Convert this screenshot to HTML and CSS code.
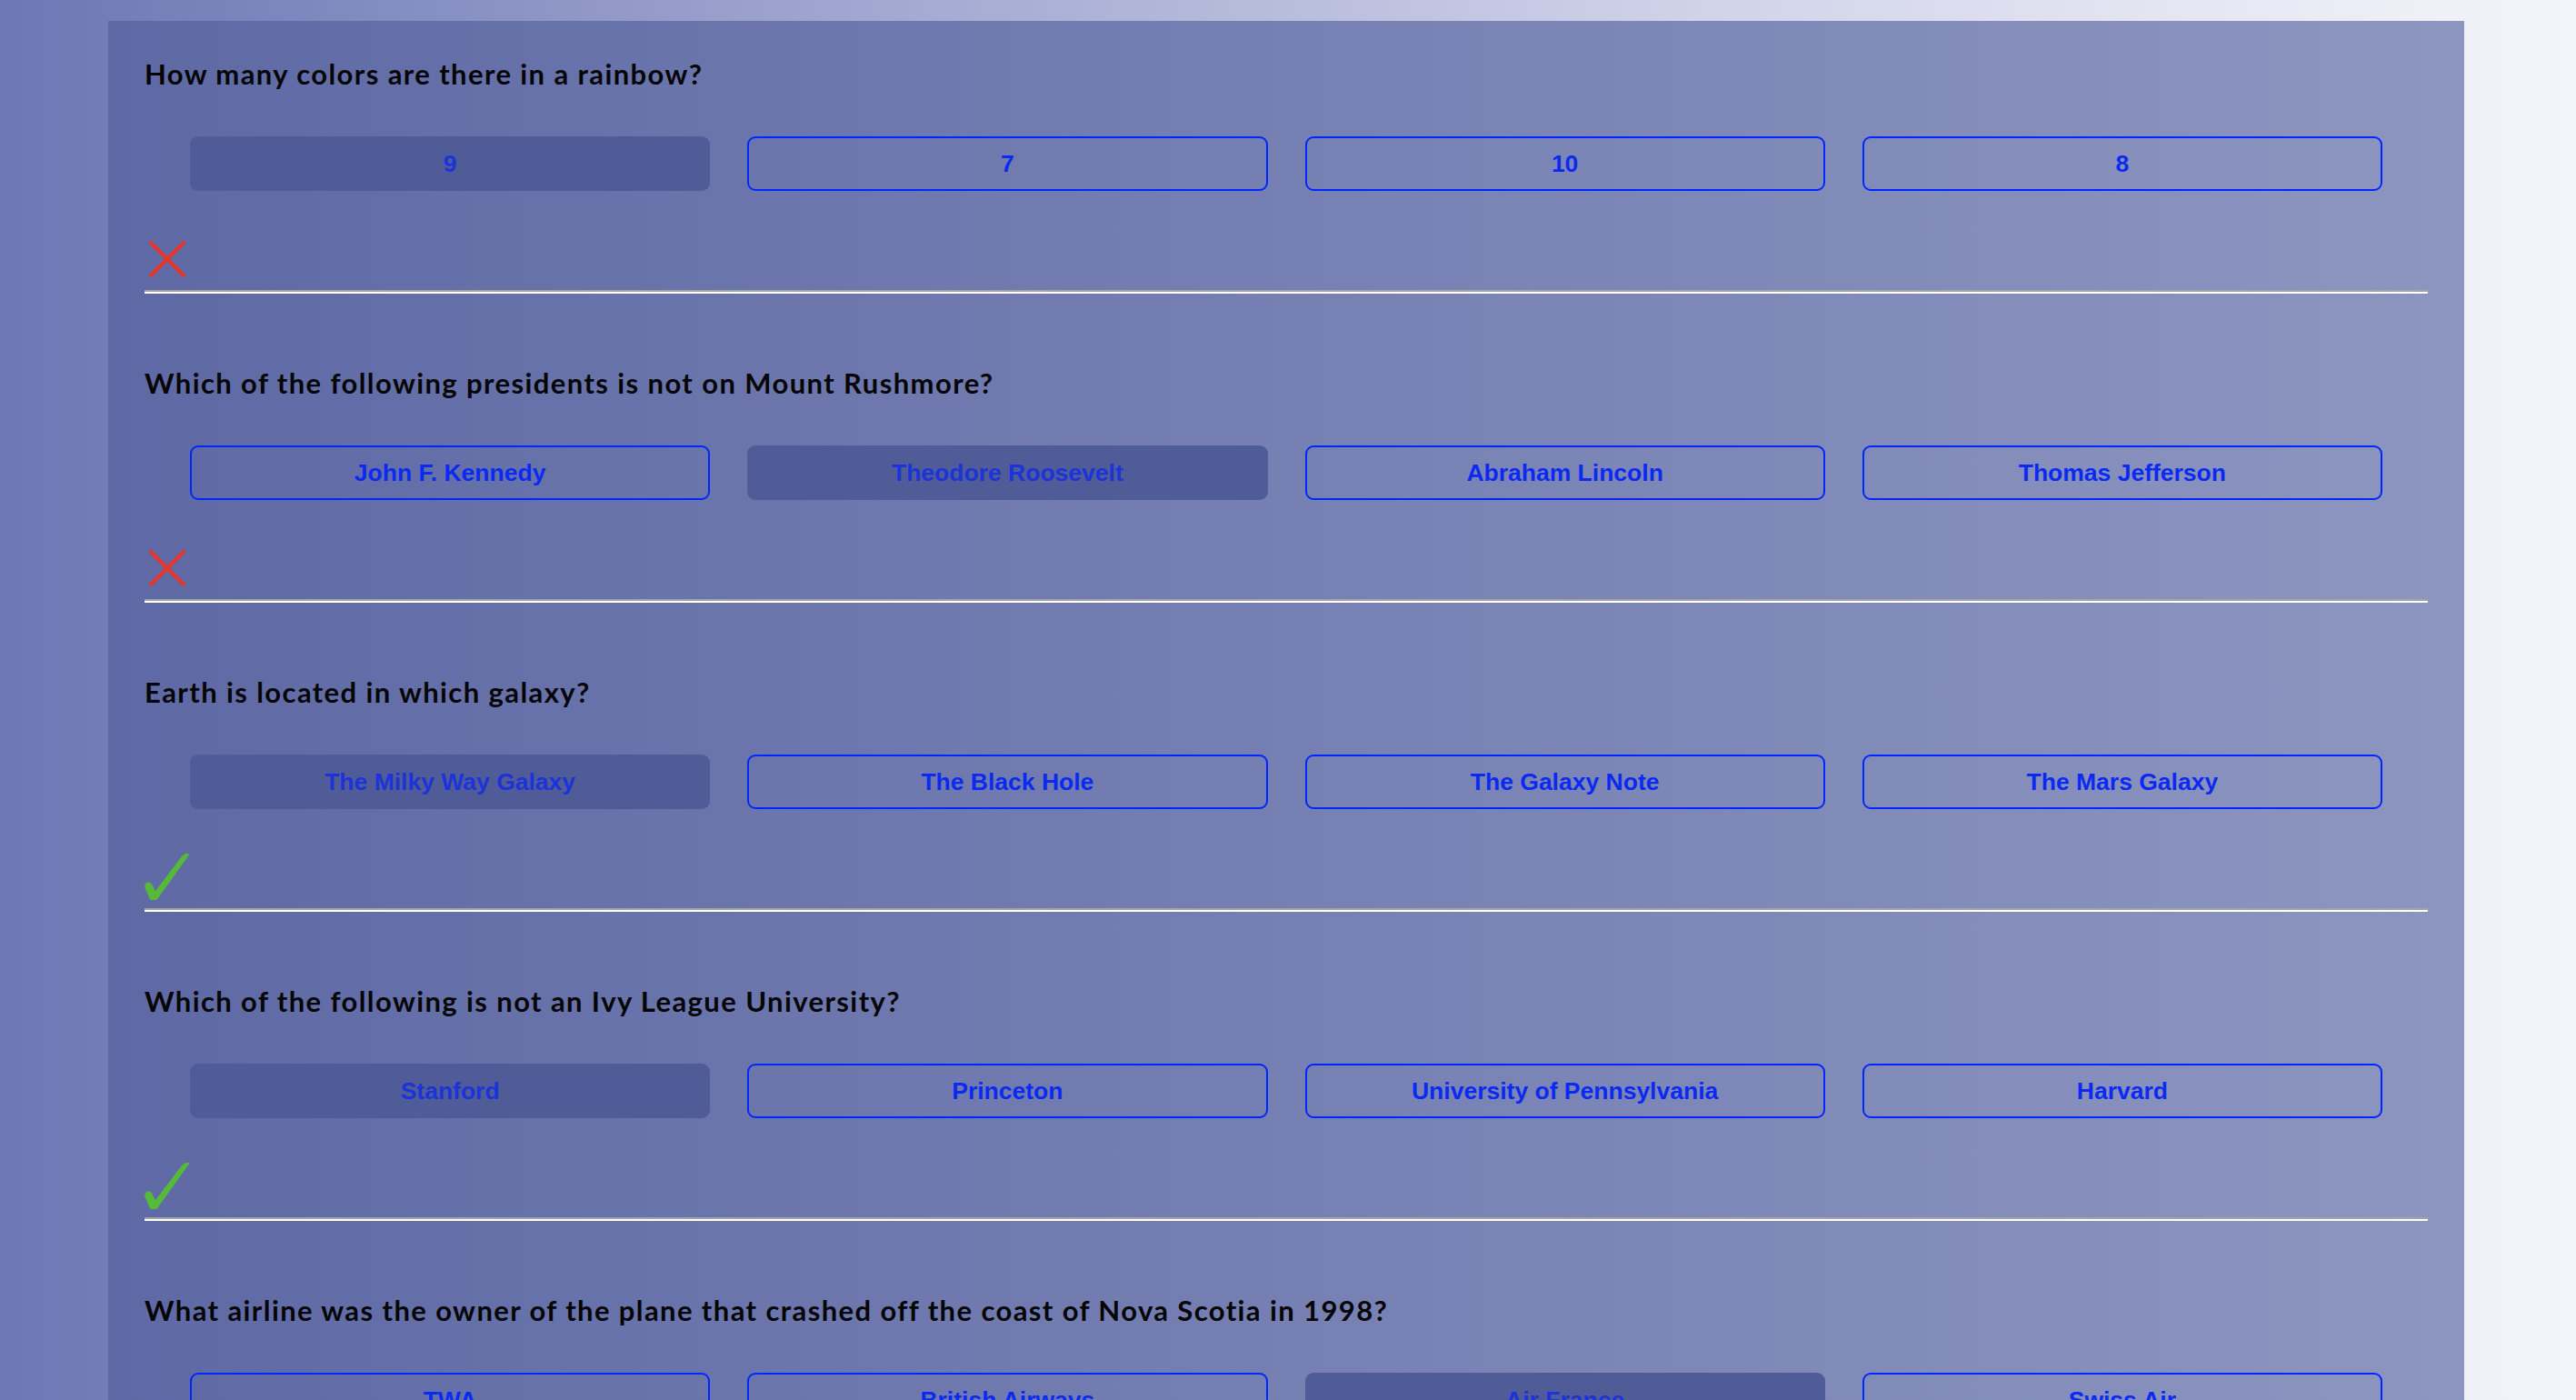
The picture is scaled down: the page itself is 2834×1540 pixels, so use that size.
FILE: index.html
```html
<!DOCTYPE html>
<html lang="en">
<head>
<meta charset="utf-8">
<title>Quiz Results</title>
<link rel="stylesheet" href="styles.css">
</head>
<body>
<main class="quiz">
  <section class="qblock">
    <h2 class="question">How many colors are there in a rainbow?</h2>
    <div class="answers">
      <button class="answer selected">9</button>
      <button class="answer">7</button>
      <button class="answer">10</button>
      <button class="answer">8</button>
    </div>
    <div class="result">
      <svg class="icon" viewBox="0 0 52 52" width="52" height="52"><line x1="6" y1="8" x2="44" y2="46" class="cross"/><line x1="44" y1="8" x2="6" y2="46" class="cross"/></svg>
    </div>
    <hr class="divider">
  </section>

  <section class="qblock">
    <h2 class="question">Which of the following presidents is not on Mount Rushmore?</h2>
    <div class="answers">
      <button class="answer">John F. Kennedy</button>
      <button class="answer selected">Theodore Roosevelt</button>
      <button class="answer">Abraham Lincoln</button>
      <button class="answer">Thomas Jefferson</button>
    </div>
    <div class="result">
      <svg class="icon" viewBox="0 0 52 52" width="52" height="52"><line x1="6" y1="8" x2="44" y2="46" class="cross"/><line x1="44" y1="8" x2="6" y2="46" class="cross"/></svg>
    </div>
    <hr class="divider">
  </section>

  <section class="qblock">
    <h2 class="question">Earth is located in which galaxy?</h2>
    <div class="answers">
      <button class="answer selected">The Milky Way Galaxy</button>
      <button class="answer">The Black Hole</button>
      <button class="answer">The Galaxy Note</button>
      <button class="answer">The Mars Galaxy</button>
    </div>
    <div class="result">
      <svg class="icon" viewBox="0 0 52 52" width="52" height="52"><path class="check" d="M48.6 3 L14.2 51 Q11.5 53.2 6.2 51.8 L0.4 38.5 Q-0.2 34 3 32.8 Q6.3 31.8 7.8 34.2 L11.9 42.2 L40.6 4.6 Q43.8 0.8 47.2 0.8 Q50 1.2 48.6 3 Z"/></svg>
    </div>
    <hr class="divider">
  </section>

  <section class="qblock">
    <h2 class="question">Which of the following is not an Ivy League University?</h2>
    <div class="answers">
      <button class="answer selected">Stanford</button>
      <button class="answer">Princeton</button>
      <button class="answer">University of Pennsylvania</button>
      <button class="answer">Harvard</button>
    </div>
    <div class="result">
      <svg class="icon" viewBox="0 0 52 52" width="52" height="52"><path class="check" d="M48.6 3 L14.2 51 Q11.5 53.2 6.2 51.8 L0.4 38.5 Q-0.2 34 3 32.8 Q6.3 31.8 7.8 34.2 L11.9 42.2 L40.6 4.6 Q43.8 0.8 47.2 0.8 Q50 1.2 48.6 3 Z"/></svg>
    </div>
    <hr class="divider">
  </section>

  <section class="qblock">
    <h2 class="question">What airline was the owner of the plane that crashed off the coast of Nova Scotia in 1998?</h2>
    <div class="answers">
      <button class="answer">TWA</button>
      <button class="answer">British Airways</button>
      <button class="answer selected">Air France</button>
      <button class="answer">Swiss Air</button>
    </div>
    <div class="result">
      <svg class="icon" viewBox="0 0 52 52" width="52" height="52"><line x1="6" y1="8" x2="44" y2="46" class="cross"/><line x1="44" y1="8" x2="6" y2="46" class="cross"/></svg>
    </div>
    <hr class="divider">
  </section>
</main>
</body>
</html>
```

FILE: styles.css
```css
html {
  overflow: hidden;
}

body {
  margin: 0;
  padding-top: 23px;
  min-height: 1540px;
  background: linear-gradient(to right, #6c77b4 0%, #a3a9d1 35%, #d2d5ea 68%, #f4f5fa 100%);
  font-family: "Liberation Sans", Arial, sans-serif;
}

.quiz {
  margin-left: 119px;
  width: 2592px;
  box-sizing: border-box;
  padding: 0 40px;
  background: linear-gradient(to right, #5e69a5, #8d96c0);
}

.qblock {
  padding-top: 38px;
}

.question {
  margin: 0;
  font-family: Lato, "Open Sans", sans-serif;
  font-weight: 700;
  font-size: 31px;
  line-height: 40px;
  letter-spacing: 1.4px;
  color: #050505;
}

.answers {
  display: grid;
  grid-template-columns: repeat(4, 1fr);
  column-gap: 41px;
  margin-top: 49px;
  padding: 0 50px;
}

.answer {
  height: 60px;
  box-sizing: border-box;
  border: 2px solid #0026ff;
  border-radius: 9px;
  background: transparent;
  color: #0a2af2;
  font-family: "Liberation Sans", Arial, sans-serif;
  font-weight: 700;
  font-size: 26.5px;
  padding: 0;
}

.answer.selected {
  border-color: transparent;
  background: #4f5c97;
  color: #1b33d8;
}

.result {
  margin-top: 48px;
  height: 52px;
}

.icon {
  display: block;
}

.cross {
  stroke: #e8352a;
  stroke-width: 4;
}

.check {
  fill: #55b93a;
}

.divider {
  margin: 9px 0 40px 0;
  height: 0;
  border: 0;
  border-top: 2px solid #a4a4a4;
  border-bottom: 2px solid #ffffff;
}
```
